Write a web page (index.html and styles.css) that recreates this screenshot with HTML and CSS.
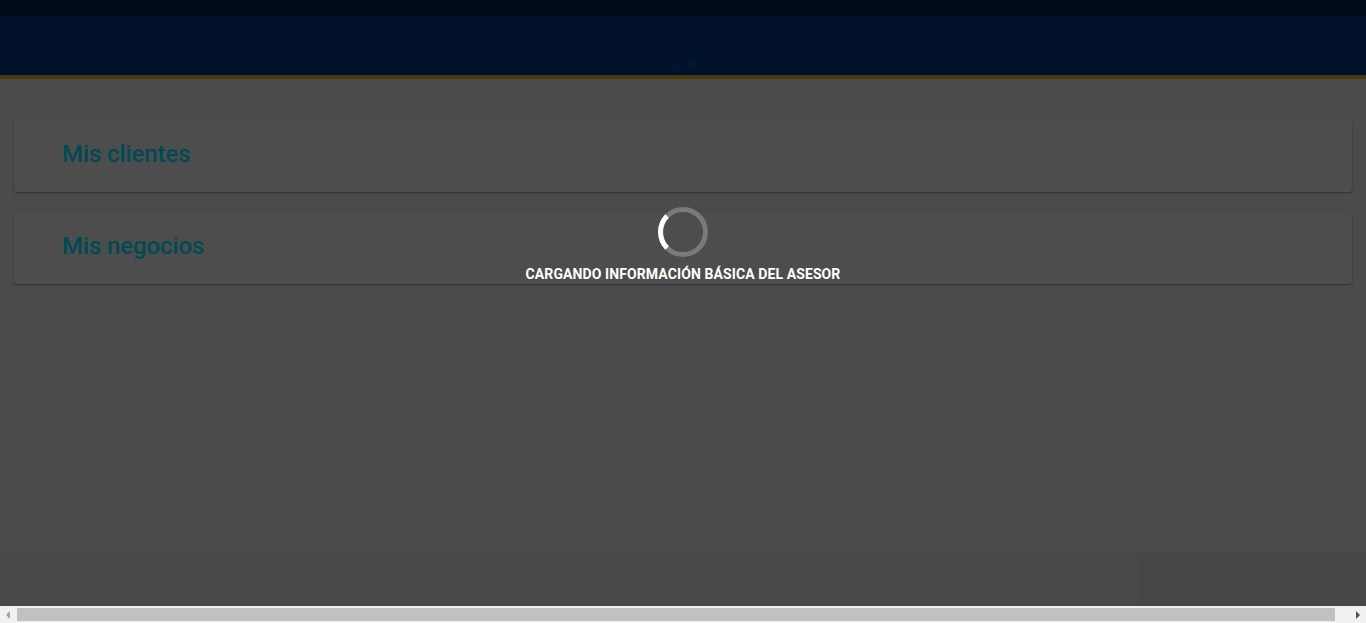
FILE: index.html
```html
<!DOCTYPE html>
<html lang="es">
<head>
<meta charset="utf-8">
<title>Asesor</title>
<link rel="stylesheet" href="styles.css">
</head>
<body>
<div class="app">
  <header class="header">
    <div class="header-top"></div>
    <div class="header-main">
      <div class="dots"><span class="dot d1"></span><span class="dot d2"></span></div>
    </div>
    <div class="header-stripe"></div>
  </header>
  <main class="content">
    <section class="card"><h2 class="card-title">Mis clientes</h2></section>
    <section class="card"><h2 class="card-title">Mis negocios</h2></section>
  </main>
  <footer class="footer">
    <div class="footer-left"></div>
    <div class="footer-right"></div>
  </footer>
  <div class="hscroll">
    <div class="arrow arrow-left"></div>
    <div class="thumb"></div>
    <div class="arrow arrow-right"></div>
  </div>
  <div class="loader">
    <svg class="spinner" width="52" height="52" viewBox="0 0 52 52">
      <circle cx="26" cy="26" r="22.5" fill="none" stroke="#7a7a7a" stroke-width="5"/>
      <path d="M10.1 10.1 A22.5 22.5 0 0 0 10.1 41.9" fill="none" stroke="#ffffff" stroke-width="5"/>
    </svg>
    <div class="loader-text">CARGANDO INFORMACIÓN BÁSICA DEL ASESOR</div>
  </div>
</div>
</body>
</html>
```
FILE: styles.css
```css
html, body {
  margin: 0;
  padding: 0;
  height: 100%;
  overflow: hidden;
}
body {
  background: #4a4b4d;
  font-family: Roboto, "Liberation Sans", Arial, sans-serif;
}
.app {
  position: relative;
  height: 623px;
  display: flex;
  flex-direction: column;
}
.header-top {
  height: 16px;
  background: #000c1c;
}
.header-main {
  height: 59px;
  background: #001129;
  display: flex;
  justify-content: center;
  align-items: flex-end;
}
.dots {
  display: flex;
  gap: 6px;
  margin-bottom: 4px;
  margin-left: -1px;
}
.dot {
  width: 11px;
  height: 11px;
  border-radius: 50%;
}
.d1 { background: #001332; }
.d2 { background: #00172d; }
.header-stripe {
  height: 4px;
  background: #4a3a09;
}
.content {
  flex: 1;
  padding: 41px 14px 0 14px;
  display: flex;
  flex-direction: column;
  gap: 20px;
}
.card {
  height: 72px;
  background: #4d4d4d;
  border-radius: 3px;
  box-shadow: 0 1px 2px rgba(0,0,0,0.35), 0 0 1px rgba(0,0,0,0.2);
  display: flex;
  align-items: center;
  padding-left: 48px;
}
.card-title {
  margin: 0;
  font-size: 24px;
  font-weight: 500;
  color: #004a54;
  letter-spacing: -0.1px;
  padding-bottom: 4px;
}
.footer {
  height: 52px;
  border-top: 1px solid #454646;
  display: flex;
}
.footer-left {
  flex: 1;
  background: #49494a;
}
.footer-right {
  width: 228px;
  background: #474747;
}
.hscroll {
  height: 17px;
  background: #f1f1f1;
  display: flex;
  align-items: center;
}
.arrow {
  width: 17px;
  height: 17px;
  position: relative;
}
.arrow-left::after {
  content: "";
  position: absolute;
  left: 6px;
  top: 5px;
  border-top: 4px solid transparent;
  border-bottom: 4px solid transparent;
  border-right: 4px solid #a3a3a3;
}
.arrow-right::after {
  content: "";
  position: absolute;
  left: 7px;
  top: 5px;
  border-top: 4px solid transparent;
  border-bottom: 4px solid transparent;
  border-left: 4px solid #505050;
}
.thumb {
  flex: 1;
  height: 13px;
  background: #c1c1c1;
  margin-right: 14px;
}
.loader {
  position: absolute;
  left: 0;
  right: 0;
  top: 206px;
  display: flex;
  flex-direction: column;
  align-items: center;
}
.spinner {
  display: block;
}
.loader-text {
  margin-top: 8px;
  color: #ffffff;
  font-family: Roboto, "Liberation Sans", Arial, sans-serif;
  font-weight: 700;
  font-size: 14px;
  letter-spacing: 0.1px;
}
```
